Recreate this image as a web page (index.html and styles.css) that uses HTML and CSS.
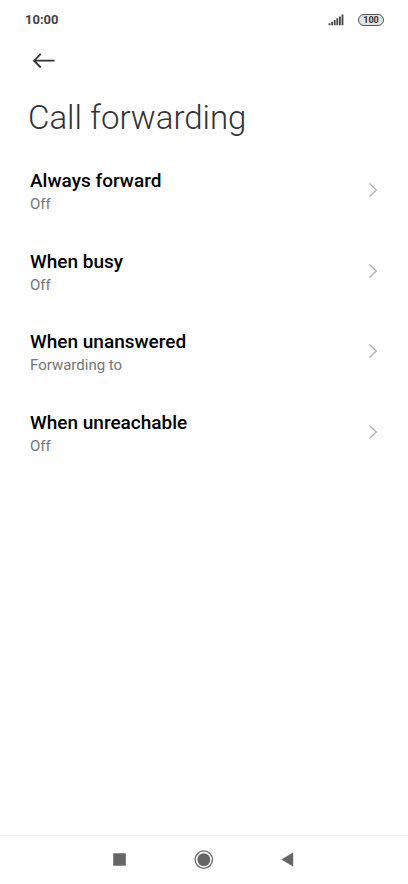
FILE: index.html
```html
<!DOCTYPE html>
<html lang="en">
<head>
<meta charset="utf-8">
<meta name="viewport" content="width=device-width, initial-scale=1">
<title>Call forwarding</title>
<link rel="stylesheet" href="styles.css">
</head>
<body>
<div class="status">
  <time class="clock">10:00</time>
  <div class="indicators">
    <svg class="signal" viewBox="0 0 16 12" aria-hidden="true">
      <path d="M1.5 11.2v-2M4.1 11.2V7.7M6.7 11.2V6M9.3 11.2V4.2M11.9 11.2V2.4M14.5 11.2V.6"/>
    </svg>
    <span class="battery">100</span>
  </div>
</div>
<header class="header">
  <button class="back" type="button" aria-label="Back">
    <svg viewBox="0 0 24 16" aria-hidden="true"><path d="M22.5 7.7H2M8.8 .9L2 7.7l6.8 6.8"/></svg>
  </button>
  <h1 class="title">Call forwarding</h1>
</header>
<main class="content">
  <nav class="options" aria-label="Call forwarding">
    <a class="option" href="#always">
      <span class="text"><span class="name">Always forward</span><span class="state">Off</span></span>
      <svg class="chevron" viewBox="0 0 10 16" aria-hidden="true"><path d="M1.5 1.5L8.3 8l-6.8 6.5"/></svg>
    </a>
    <a class="option" href="#busy">
      <span class="text"><span class="name">When busy</span><span class="state">Off</span></span>
      <svg class="chevron" viewBox="0 0 10 16" aria-hidden="true"><path d="M1.5 1.5L8.3 8l-6.8 6.5"/></svg>
    </a>
    <a class="option" href="#unanswered">
      <span class="text"><span class="name">When unanswered</span><span class="state">Forwarding to</span></span>
      <svg class="chevron" viewBox="0 0 10 16" aria-hidden="true"><path d="M1.5 1.5L8.3 8l-6.8 6.5"/></svg>
    </a>
    <a class="option" href="#unreachable">
      <span class="text"><span class="name">When unreachable</span><span class="state">Off</span></span>
      <svg class="chevron" viewBox="0 0 10 16" aria-hidden="true"><path d="M1.5 1.5L8.3 8l-6.8 6.5"/></svg>
    </a>
  </nav>
</main>
<footer class="navbar">
  <button type="button" aria-label="Recent apps">
    <svg viewBox="0 0 20 20" aria-hidden="true"><rect x="3.2" y="3.2" width="12.6" height="12.6" rx=".5"/></svg>
  </button>
  <button type="button" aria-label="Home">
    <svg viewBox="0 0 20 20" aria-hidden="true"><circle class="ring" cx="9.8" cy="9.6" r="8.7"/><circle cx="9.8" cy="9.6" r="6.4"/></svg>
  </button>
  <button type="button" aria-label="Go back">
    <svg viewBox="0 0 20 20" aria-hidden="true"><path d="M3.2 9.6L15.2 2.6v14z"/></svg>
  </button>
</footer>
</body>
</html>
```
FILE: styles.css
```css
* {
  box-sizing: border-box;
}

body {
  display: flex;
  flex-direction: column;
  min-height: 100vh;
  margin: 0;
  background: #fefefe;
  color: #000;
  font-family: Roboto, sans-serif;
}

button {
  display: flex;
  padding: 0;
  border: 0;
  background: none;
}

.status {
  display: flex;
  align-items: center;
  justify-content: space-between;
  height: 39px;
  padding: 0 24px 0 25px;
}

.clock {
  color: #444;
  font-size: 13px;
  font-weight: 700;
}

.indicators {
  display: flex;
  align-items: center;
  gap: 14px;
}

.signal {
  width: 16px;
  height: 12px;
  fill: none;
  stroke: #444;
  stroke-width: 1.8;
}

.battery {
  width: 26px;
  border: 1px solid #555;
  border-radius: 6px;
  background: #e4e4e4;
  color: #333;
  font-size: 9px;
  font-weight: 700;
  line-height: 10px;
  text-align: center;
}

.header {
  padding: 14px 28px 0;
}

.back {
  margin-left: 4px;
}

.back svg {
  width: 24px;
  height: 16px;
  fill: none;
  stroke: #333;
  stroke-width: 1.8;
}

.title {
  margin: 29px 0 0;
  color: #333;
  font-size: 33px;
  font-weight: 300;
  line-height: 40px;
}

.content {
  flex: 1;
  padding-top: 12px;
}

.options {
  display: grid;
  grid-auto-rows: 1fr;
  min-height: 322px;
}

.option {
  display: flex;
  align-items: center;
  justify-content: space-between;
  padding: 0 30px;
  color: inherit;
  text-decoration: none;
}

.text {
  display: flex;
  flex-direction: column;
  padding-top: 4px;
}

.name {
  font-size: 19px;
  font-weight: 500;
  line-height: 24px;
}

.state {
  color: #757575;
  font-size: 15px;
  line-height: 22px;
}

.chevron {
  width: 10px;
  height: 16px;
  fill: none;
  stroke: #b0b0b0;
  stroke-width: 1.3;
}

.navbar {
  display: flex;
  justify-content: center;
  gap: 64px;
  padding: 14px 0;
  border-top: 1px solid #f2f2f2;
}

.navbar svg {
  width: 20px;
  height: 20px;
  fill: #666;
}

.navbar .ring {
  fill: none;
  stroke: #666;
  stroke-width: 1.3;
}
```
